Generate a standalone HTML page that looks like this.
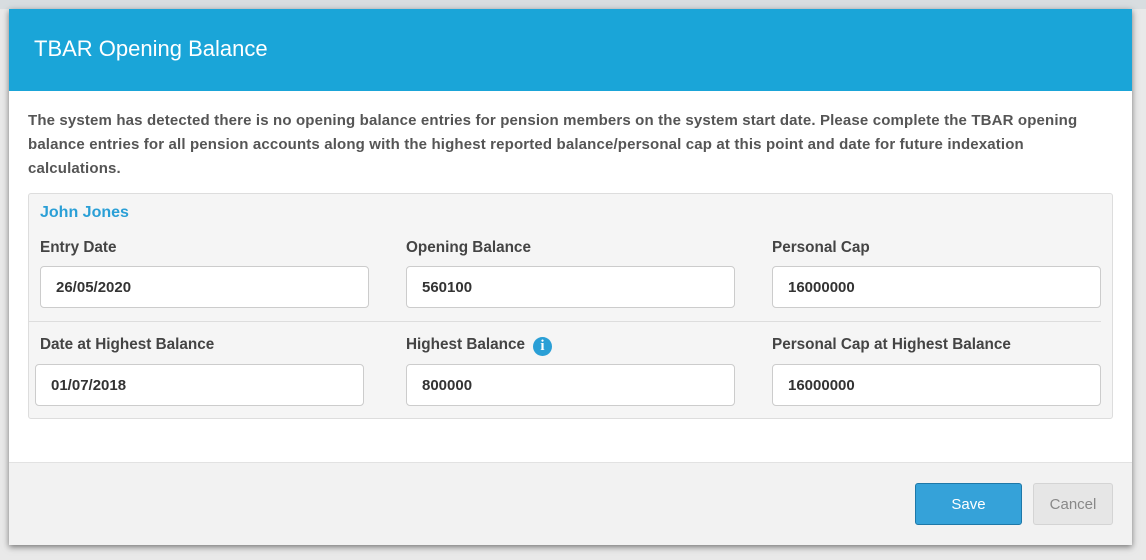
<!DOCTYPE html>
<html><head><style>
body{margin:0;width:1146px;height:560px;background:#e9e9e9;font-family:"Liberation Sans",sans-serif;position:relative;overflow:hidden}
.bgtop{position:absolute;left:0;top:0;width:1146px;height:9px;background:#d8dde0}
.modal{position:absolute;left:9px;top:9px;width:1123px;height:536px;background:#fff;box-shadow:0 2px 6px rgba(0,0,0,.5);overflow:hidden}
.hdr{height:82px;background:#1aa5d8;color:#fff;font-size:22px;line-height:80px;padding-left:25px}
.p{position:absolute;left:19px;top:100px;width:1080px;font-size:15px;letter-spacing:0.15px;font-weight:bold;color:#555;line-height:24px}
.panel{position:absolute;left:19px;top:184px;width:1083px;height:224px;background:#f5f5f5;border:1px solid #ddd;border-radius:3px}
.name{position:absolute;left:11px;top:10px;color:#2a9fd6;font-size:16px;font-weight:bold}
.lbl{position:absolute;font-size:15.3px;font-weight:bold;color:#444}
.inp{position:absolute;width:329px;height:42px;background:#fff;border:1px solid #ccc;border-radius:4px;font-size:15px;font-weight:bold;color:#333;line-height:42px;text-indent:15px;box-sizing:border-box}
.hr{position:absolute;left:0;top:127px;width:1072px;height:1px;background:#ddd}
.foot{position:absolute;left:0;top:453px;width:1123px;height:83px;background:#f2f2f2;border-top:1px solid #e2e2e2}
.btn{position:absolute;top:20px;height:42px;border-radius:3px;font-size:15px;text-align:center;line-height:42px;box-sizing:border-box}
.info{display:inline-block;width:19px;height:19px;border-radius:50%;background:#2a9fd6;color:#fff;font-family:"Liberation Serif",serif;font-weight:bold;font-size:15px;text-align:center;line-height:19px;vertical-align:-1px;margin-left:8px}
</style></head><body>
<div class="bgtop"></div>
<div class="modal">
<div class="hdr">TBAR Opening Balance</div>
<div class="p">The system has detected there is no opening balance entries for pension members on the system start date. Please complete the TBAR opening balance entries for all pension accounts along with the highest reported balance/personal cap at this point and date for future indexation calculations.</div>
<div class="panel">
<div class="name">John Jones</div>
<div class="lbl" style="left:11px;top:45px">Entry Date</div>
<div class="lbl" style="left:377px;top:45px">Opening Balance</div>
<div class="lbl" style="left:743px;top:45px">Personal Cap</div>
<div class="inp" style="left:11px;top:72px">26/05/2020</div>
<div class="inp" style="left:377px;top:72px">560100</div>
<div class="inp" style="left:743px;top:72px">16000000</div>
<div class="hr"></div>
<div class="lbl" style="left:11px;top:142px">Date at Highest Balance</div>
<div class="lbl" style="left:377px;top:142px">Highest Balance<span class="info">i</span></div>
<div class="lbl" style="left:743px;top:142px">Personal Cap at Highest Balance</div>
<div class="inp" style="left:6px;top:170px">01/07/2018</div>
<div class="inp" style="left:377px;top:170px">800000</div>
<div class="inp" style="left:743px;top:170px">16000000</div>
</div>
<div class="foot">
<div class="btn" style="left:906px;width:107px;background:#35a2d9;border:1px solid #1e78a8;color:#fff">Save</div>
<div class="btn" style="left:1024px;width:80px;background:#e6e6e6;border:1px solid #d4d4d4;color:#888">Cancel</div>
</div>
</div>
</body></html>
